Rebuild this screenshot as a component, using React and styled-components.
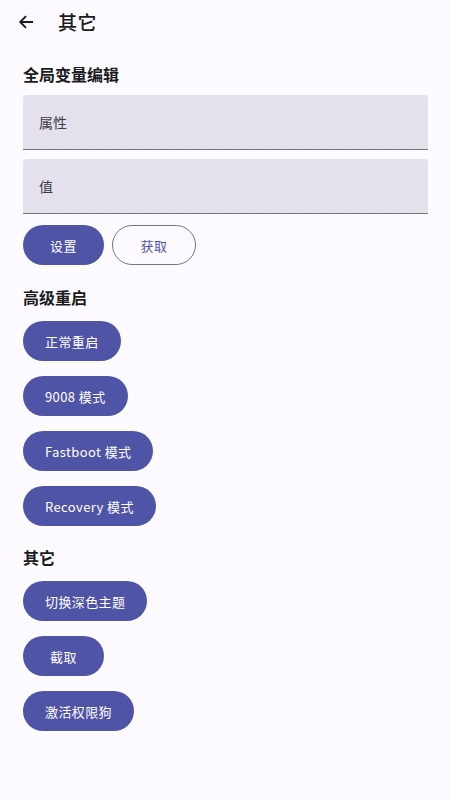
import styled, { createGlobalStyle } from "styled-components";

const GlobalStyle = createGlobalStyle`
  html, body {
    margin: 0;
    padding: 0;
    background: #fdfbff;
  }
  body {
    font-family: "Noto Sans CJK SC", "Noto Sans", Roboto, sans-serif;
    color: #1b1b21;
  }
`;

const restartButtons = ["正常重启", "9008 模式", "Fastboot 模式", "Recovery 模式"];
const otherButtons = ["切换深色主题", "截取", "激活权限狗"];

const App = () => {
  return (
    <Page>
      <GlobalStyle />
      <Header>
        <BackButton aria-label="back">
          <svg width="16" height="16" viewBox="0 0 16 16" fill="none">
            <path
              d="M15 8H2.5M8 2.2L2.2 8L8 13.8"
              stroke="#1b1b21"
              strokeWidth="1.9"
            />
          </svg>
        </BackButton>
        <HeaderTitle>其它</HeaderTitle>
      </Header>
      <Content>
        <SectionTitle $first>全局变量编辑</SectionTitle>
        <Fields>
          <Field>
            <FieldLabel>属性</FieldLabel>
          </Field>
          <Field>
            <FieldLabel>值</FieldLabel>
          </Field>
        </Fields>
        <ButtonRow>
          <Button>设置</Button>
          <Button $outline>获取</Button>
        </ButtonRow>

        <SectionTitle>高级重启</SectionTitle>
        <ButtonColumn>
          {restartButtons.map((label) => (
            <Button key={label}>{label}</Button>
          ))}
        </ButtonColumn>

        <SectionTitle $last>其它</SectionTitle>
        <ButtonColumn>
          {otherButtons.map((label) => (
            <Button key={label}>{label}</Button>
          ))}
        </ButtonColumn>
      </Content>
    </Page>
  );
};

const Page = styled.div`
  width: 450px;
  min-height: 800px;
  background: #fdfbff;
`;
const Header = styled.div`
  height: 44px;
  display: flex;
  align-items: center;
  padding-left: 18px;
`;
const BackButton = styled.div`
  width: 16px;
  height: 16px;
  display: flex;
  margin-right: 24px;
`;
const HeaderTitle = styled.h1`
  margin: 0;
  font-size: 19px;
  font-weight: 500;
  line-height: 24px;
  letter-spacing: 0.5px;
`;
const Content = styled.div`
  padding: 0 22px 0 23px;
  display: flex;
  flex-direction: column;
`;
const SectionTitle = styled.h2`
  margin: ${(p) => (p.$first ? "18px" : p.$last ? "19px" : "20px")} 0 12px;
  font-size: 16px;
  font-weight: 700;
  line-height: 24px;
  color: #1b1b21;
`;
const Fields = styled.div`
  display: flex;
  flex-direction: column;
  gap: 9px;
  margin-top: -3px;
`;
const Field = styled.div`
  height: 54px;
  background: #e4e1ec;
  border-radius: 4px 4px 0 0;
  border-bottom: 1.5px solid #77767f;
  display: flex;
  align-items: center;
  padding-left: 16px;
`;
const FieldLabel = styled.span`
  font-size: 14px;
  color: #3c3c44;
`;
const ButtonRow = styled.div`
  display: flex;
  gap: 8px;
  margin-top: 11px;
`;
const ButtonColumn = styled.div`
  display: flex;
  flex-direction: column;
  align-items: flex-start;
  gap: 15px;
`;
const Button = styled.button`
  height: 40px;
  padding: 0 22px;
  border-radius: 20px;
  font-family: inherit;
  font-size: 13px;
  font-weight: 400;
  letter-spacing: 0.4px;
  cursor: pointer;
  background: ${(p) => (p.$outline ? "transparent" : "#5054a6")};
  color: ${(p) => (p.$outline ? "#5054a6" : "#ffffff")};
  border: ${(p) => (p.$outline ? "1px solid #77767f" : "none")};
  min-width: ${(p) => (p.$outline ? "84px" : "81px")};
`;

export default App;
